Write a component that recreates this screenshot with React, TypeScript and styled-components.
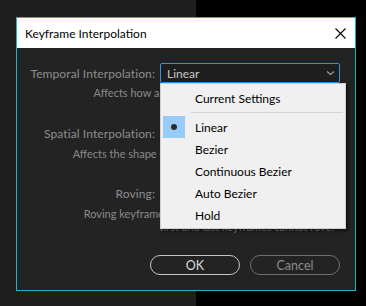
import React from "react";
import styled, { createGlobalStyle } from "styled-components";

const GlobalStyle = createGlobalStyle`
  html, body { margin: 0; padding: 0; }
  body {
    width: 366px;
    height: 306px;
    overflow: hidden;
    background: #000;
    font-family: Lato, "Noto Sans", sans-serif;
  }
`;

const Page = styled.div`
  width: 366px;
  height: 306px;
  box-sizing: border-box;
  padding: 17px 0 0 16px;
  background: linear-gradient(to right, #1f1f1f 0 196px, #000 196px);
`;

const Dialog = styled.div`
  width: 340px;
  height: 274px;
  box-sizing: border-box;
  border: 1px solid #1fb3c6;
  background: #232323;
  display: flex;
  flex-direction: column;
`;

const TitleBar = styled.div`
  height: 30px;
  flex: none;
  background: #fff;
  display: flex;
  align-items: center;
  justify-content: space-between;
  padding: 0 9px 0 8px;
`;

const Title = styled.span`
  font-size: 12px;
  color: #000;
  margin-top: 1px;
`;

const CloseButton = styled.div`
  width: 12px;
  height: 12px;
  display: flex;
  align-items: center;
  justify-content: center;
`;

const Body = styled.div`
  position: relative;
  flex: 1;
  display: flex;
  flex-direction: column;
  padding-top: 15px;
`;

const Row = styled.div<{ $top?: number }>`
  display: grid;
  grid-template-columns: 138px 180px;
  column-gap: 5px;
  align-items: center;
  height: 20px;
  margin-top: ${(p) => p.$top ?? 0}px;
`;

const Label = styled.span`
  text-align: right;
  white-space: nowrap;
  font-size: 12px;
  letter-spacing: 0.1px;
  color: #8e8e8e;
`;

const Select = styled.div`
  height: 20px;
  box-sizing: border-box;
  border: 1px solid #3a8ee6;
  border-radius: 2px;
  background: #1e1e1e;
  display: flex;
  align-items: center;
  justify-content: space-between;
  padding: 0 4px 0 6px;
  font-size: 12px;
  color: #c6c6c6;
`;

const Description = styled.div<{ $top?: number }>`
  text-align: right;
  padding-right: 21px;
  font-size: 11px;
  line-height: 13px;
  color: #8a8a8a;
  margin-top: ${(p) => p.$top ?? 0}px;
  white-space: nowrap;
`;

const Checkbox = styled.div`
  width: 12px;
  height: 12px;
  border: 1px solid #8a8a8a;
`;

const Buttons = styled.div`
  margin-top: auto;
  margin-bottom: 15px;
  display: flex;
  justify-content: flex-end;
  gap: 10px;
  padding-right: 15px;
`;

const Pill = styled.div<{ $primary?: boolean }>`
  width: 90px;
  height: 20px;
  box-sizing: border-box;
  border-radius: 10px;
  border: 1.5px solid ${(p) => (p.$primary ? "#c4c4c4" : "#6f6f6f")};
  color: ${(p) => (p.$primary ? "#dadada" : "#8c8c8c")};
  font-size: 12.5px;
  display: flex;
  align-items: center;
  justify-content: center;
`;

const Menu = styled.div`
  position: absolute;
  left: 143px;
  top: 35px;
  width: 186px;
  box-sizing: border-box;
  padding: 3px 0 2px;
  background: #f0f0f0;
  border: 1px solid #cfcfcf;
  box-shadow: 2px 2px 3px rgba(0, 0, 0, 0.55);
  display: flex;
  flex-direction: column;
`;

const MenuItem = styled.div`
  height: 22px;
  display: flex;
  align-items: center;
  font-size: 12px;
  color: #000;
`;

const Check = styled.div<{ $on?: boolean }>`
  width: 22px;
  height: 22px;
  margin: 0 10px 0 2px;
  background: ${(p) => (p.$on ? "#99cbf7" : "transparent")};
  display: flex;
  align-items: center;
  justify-content: center;
`;

const Dot = styled.div`
  width: 6px;
  height: 6px;
  border-radius: 50%;
  background: #2b2b2b;
`;

const Separator = styled.div`
  height: 1px;
  margin: 3px 2px 3px 30px;
  background: #d5d5d5;
`;

const options = ["Linear", "Bezier", "Continuous Bezier", "Auto Bezier", "Hold"];

export default function App() {
  return (
    <>
      <GlobalStyle />
      <Page>
        <Dialog>
          <TitleBar>
            <Title>Keyframe Interpolation</Title>
            <CloseButton>
              <svg width="11" height="11" viewBox="0 0 11 11">
                <path d="M0.5 0.5L10.5 10.5M10.5 0.5L0.5 10.5" stroke="#000" strokeWidth="1.1" />
              </svg>
            </CloseButton>
          </TitleBar>
          <Body>
            <Row>
              <Label>Temporal Interpolation:</Label>
              <Select>
                <span>Linear</span>
                <svg width="9" height="6" viewBox="0 0 9 6">
                  <path d="M1 1.5L4.5 4.5L8 1.5" stroke="#a0a0a0" strokeWidth="1.1" fill="none" />
                </svg>
              </Select>
            </Row>
            <Description $top={3}>Affects how a property changes in time (Timeline).</Description>
            <Row $top={24}>
              <Label>Spatial Interpolation:</Label>
              <Select>
                <span>Linear</span>
              </Select>
            </Row>
            <Description $top={4}>Affects the shape of the path (in a Composition panel).</Description>
            <Row $top={23}>
              <Label>Roving:</Label>
              <Checkbox />
            </Row>
            <Description $top={4}>Roving keyframes rove in time to smooth out speed,</Description>
            <Description>first and last keyframes cannot rove.</Description>
            <Buttons>
              <Pill $primary>OK</Pill>
              <Pill>Cancel</Pill>
            </Buttons>
            <Menu>
              <MenuItem>
                <Check />
                Current Settings
              </MenuItem>
              <Separator />
              {options.map((o) => (
                <MenuItem key={o}>
                  <Check $on={o === "Linear"}>{o === "Linear" && <Dot />}</Check>
                  {o}
                </MenuItem>
              ))}
            </Menu>
          </Body>
        </Dialog>
      </Page>
    </>
  );
}
